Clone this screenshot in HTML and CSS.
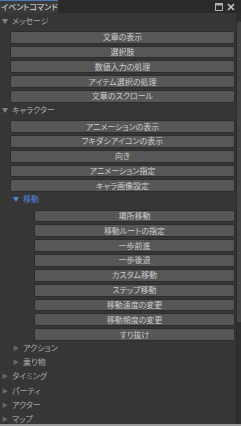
FILE: index.html
```html
<!DOCTYPE html>
<html lang="ja">
<head>
    <meta charset="UTF-8">
    <title>イベントコマンド</title>
    <link rel="stylesheet" href="styles.css">
</head>
<body>
    <div class="panel">
        <div class="titlebar">
            <div class="tab">イベントコマンド</div>
            <div class="tools">
                <svg width="8" height="8" viewBox="0 0 8 8"><rect x="0.5" y="0.5" width="7" height="7" fill="none" stroke="#b0b0b0"/><rect x="0.5" y="0.5" width="7" height="2" fill="#b0b0b0"/></svg>
                <svg width="8" height="8" viewBox="0 0 8 8"><path d="M1 1L7 7M7 1L1 7" stroke="#c8c8c8" stroke-width="1.6"/></svg>
            </div>
        </div>
        <div class="content">
            <div class="tree">
                <!-- メッセージ -->
                <div class="label"><span class="arrow">▼</span>メッセージ</div>
                <div class="buttons">
                    <button>文章の表示</button>
                    <button>選択肢</button>
                    <button>数値入力の処理</button>
                    <button>アイテム選択の処理</button>
                    <button>文章のスクロール</button>
                </div>
                <!-- キャラクター -->
                <div class="label"><span class="arrow">▼</span>キャラクター</div>
                <div class="buttons">
                    <button>アニメーションの表示</button>
                    <button>フキダシアイコンの表示</button>
                    <button>向き</button>
                    <button>アニメーション指定</button>
                    <button>キャラ画像設定</button>
                </div>
                <div class="label sub active"><span class="arrow">▼</span>移動</div>
                <div class="buttons sub">
                    <button>場所移動</button>
                    <button>移動ルートの指定</button>
                    <button>一歩前進</button>
                    <button>一歩後退</button>
                    <button>カスタム移動</button>
                    <button>ステップ移動</button>
                    <button>移動速度の変更</button>
                    <button>移動頻度の変更</button>
                    <button>すり抜け</button>
                </div>
                <div class="label sub closed"><span class="arrow">▶</span>アクション</div>
                <div class="label sub closed"><span class="arrow">▶</span>乗り物</div>
                <!-- closed groups -->
                <div class="label closed"><span class="arrow">▶</span>タイミング</div>
                <div class="label closed"><span class="arrow">▶</span>パーティ</div>
                <div class="label closed"><span class="arrow">▶</span>アクター</div>
                <div class="label closed"><span class="arrow">▶</span>マップ</div>
            </div>
            <div class="scrollbar">
                <div class="thumb"></div>
            </div>
        </div>
    </div>
</body>
</html>
```

FILE: styles.css
```css
*{
    box-sizing: border-box;
}
body{
    margin: 0;
    background-color: #363636;
    font-family: "Noto Sans CJK JP", "Noto Sans", sans-serif;
    font-feature-settings: "palt";
}
.panel{
    width: 241px;
    height: 426px;
    overflow: hidden;
    display: flex;
    flex-direction: column;
    border-bottom: 2px solid #9c9c9c;
}
.titlebar{
    height: 13px;
    display: flex;
    background-color: #2a2a2a;
}
.tab{
    width: 58px;
    height: 13px;
    background-color: #3b3b3b;
    border-top: 1px solid #4a78b0;
    color: #e4e4e4;
    font-size: 8px;
    line-height: 12px;
    padding-left: 1px;
    white-space: nowrap;
}
.tools{
    margin-left: auto;
    display: flex;
    gap: 4px;
    padding: 3px 6px 0 0;
}
.content{
    flex: 1;
    display: flex;
    background-color: #363636;
}
.tree{
    flex: 1;
    padding-top: 0.5px;
}
.label{
    height: 14.2px;
    line-height: 14px;
    font-size: 8px;
    color: #ababab;
    padding-left: 2px;
    white-space: nowrap;
}
.label .arrow{
    display: inline-block;
    width: 10px;
    font-size: 6px;
    color: #858585;
    vertical-align: top;
}
.label.closed .arrow{
    color: #6a6a6a;
}
.label.sub{
    padding-left: 13px;
}
.label.active, .label.active .arrow{
    color: #4f8ad8;
}
.buttons{
    display: flex;
    flex-direction: column;
    gap: 2px;
    padding: 3px 1px 0 10px;
}
.buttons.sub{
    padding-left: 34px;
}
.buttons button{
    height: 12.85px;
    padding: 0;
    background-color: #575757;
    border: 1px solid #2c2c2c;
    border-radius: 2px;
    color: #cccccc;
    font-family: "Noto Sans CJK JP", "Noto Sans", sans-serif;
    font-feature-settings: "palt";
    font-size: 8px;
    line-height: 10px;
}
.scrollbar{
    width: 5px;
    background-color: #2f2f2f;
    border-left: 1px solid #2a2a2a;
    padding-top: 9px;
}
.thumb{
    height: 300px;
    background-color: #454545;
}
```
